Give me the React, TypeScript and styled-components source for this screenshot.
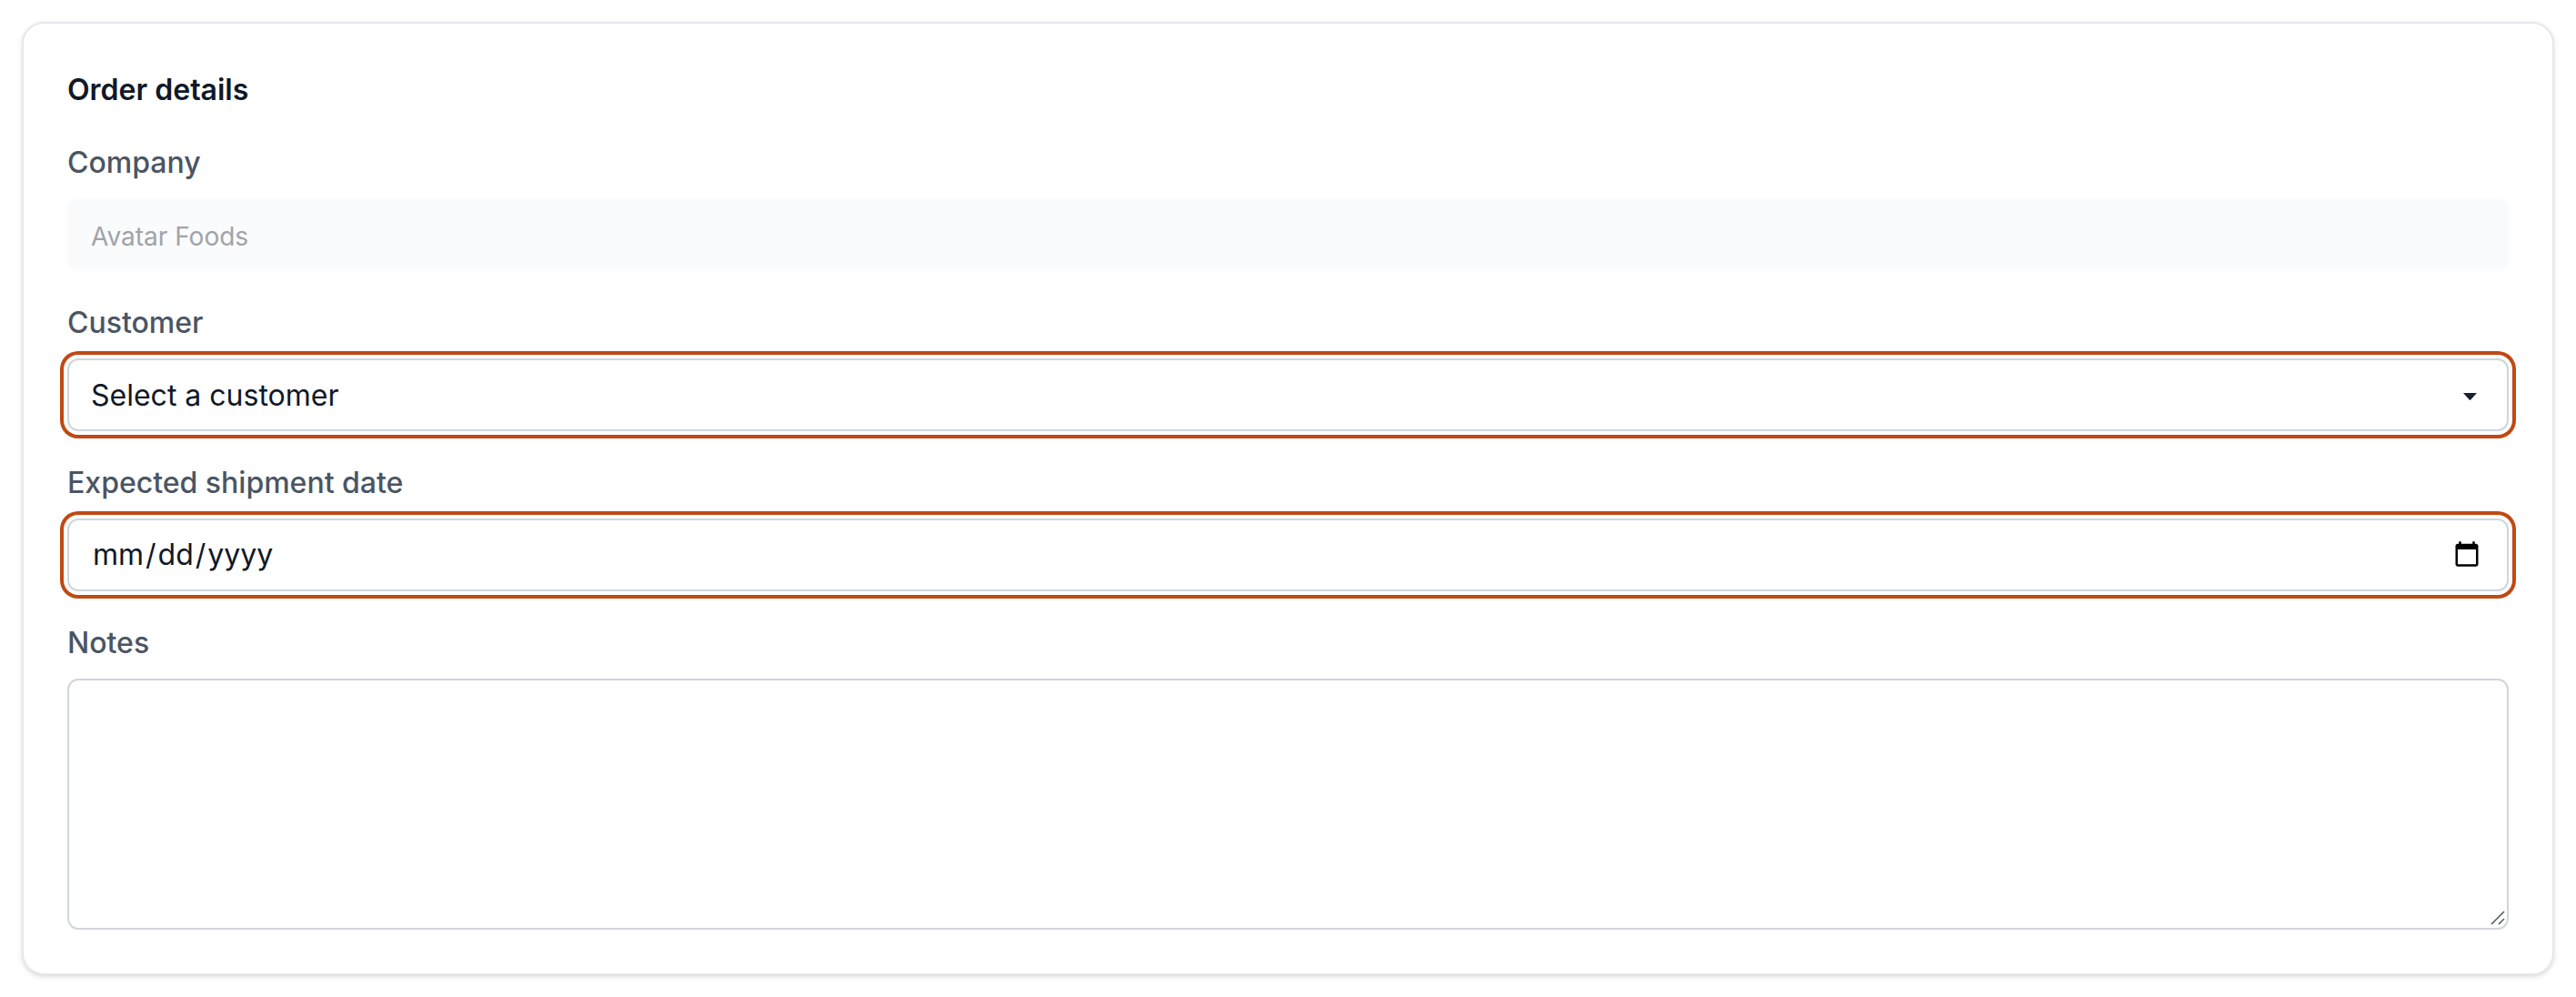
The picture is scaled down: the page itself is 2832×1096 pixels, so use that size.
import styled, { createGlobalStyle } from "styled-components";

export default function App() {
  return (
    <>
      <GlobalStyle />
      <Page>
        <Card>
          <Heading>Order details</Heading>
          <Field>
            <Label htmlFor="company">Company</Label>
            <CompanyInput id="company" disabled value="Avatar Foods" readOnly />
          </Field>
          <Field>
            <Label htmlFor="customer">Customer</Label>
            <Overlaid>
              <CustomerSelect id="customer" defaultValue="" autoComplete="off">
                <option value="">Select a customer</option>
              </CustomerSelect>
              <Caret viewBox="0 0 15 8" aria-hidden="true">
                <path d="M0 0h15L8.2 7.6a1 1 0 0 1-1.4 0z" />
              </Caret>
            </Overlaid>
          </Field>
          <Field>
            <Label htmlFor="shipment">Expected shipment date</Label>
            <DateInput id="shipment" type="date" />
          </Field>
          <Field>
            <Label htmlFor="notes">Notes</Label>
            <Overlaid>
              <NotesArea id="notes" rows={5} />
              <Grip viewBox="0 0 16 16" aria-hidden="true">
                <path d="M1 15 15 1M9 15l6-6" />
              </Grip>
            </Overlaid>
          </Field>
        </Card>
      </Page>
    </>
  );
}

const GlobalStyle = createGlobalStyle`
  html {
    zoom: 2;
  }

  body {
    margin: 0;
    background: #fff;
    font-family: Inter, "Liberation Sans", sans-serif;
  }

  * {
    box-sizing: border-box;
  }
`;

const Page = styled.div`
  padding: 12px;
`;

const Card = styled.form`
  display: flex;
  flex-direction: column;
  gap: 16px;
  padding: 24px;
  background: #fff;
  border: 1px solid #e5e7eb;
  border-radius: 12px;
  box-shadow: 0 1px 3px rgba(0, 0, 0, 0.1), 0 1px 2px -1px rgba(0, 0, 0, 0.1);
`;

const Heading = styled.h2`
  margin: 0;
  padding-top: 1px;
  font-size: 16px;
  line-height: 23px;
  font-weight: 600;
  color: #111827;
`;

const Field = styled.div`
  display: flex;
  flex-direction: column;
  gap: 8px;
`;

const Overlaid = styled.div`
  position: relative;
  display: flex;
  flex-direction: column;
`;

const Label = styled.label`
  padding-top: 1px;
  font-size: 16px;
  line-height: 23px;
  font-weight: 500;
  color: #4b5563;
`;

const CompanyInput = styled.input`
  height: 40px;
  padding: 2px 13px 0;
  border: 0;
  border-radius: 6px;
  background: #fafbfc;
  color: #a0a3a9;
  font: 400 14px/20px Inter, sans-serif;
`;

const CustomerSelect = styled.select`
  appearance: none;
  height: 40px;
  padding: 1px 12px 0;
  border: 1px solid #d1d5db;
  border-radius: 6px;
  background: #fff;
  color: #111827;
  font: 400 16px/24px Inter, sans-serif;
  box-shadow: 0 0 0 2px #fff, 0 0 0 4px #c14812;
`;

const Caret = styled.svg`
  position: absolute;
  top: 19px;
  right: 17.5px;
  width: 7.5px;
  height: 4px;
  fill: #1a1f2e;
  pointer-events: none;
`;

const DateInput = styled.input`
  height: 40px;
  padding: 0 12px;
  border: 1px solid #d1d5db;
  border-radius: 6px;
  background: #fff;
  color: #111827;
  font: 400 16px/24px Inter, sans-serif;
  box-shadow: 0 0 0 2px #fff, 0 0 0 4px #c14812;
`;

const NotesArea = styled.textarea`
  display: block;
  padding: 8px 12px;
  border: 1px solid #d1d5db;
  border-radius: 6px;
  background: #fff;
  color: #111827;
  font: 400 16px/24px Inter, sans-serif;

  &::-webkit-resizer {
    background: transparent;
  }
`;

const Grip = styled.svg`
  position: absolute;
  right: 2px;
  bottom: 2.5px;
  width: 8px;
  height: 8px;
  fill: none;
  stroke: #555;
  stroke-width: 1.5;
  pointer-events: none;
`;
